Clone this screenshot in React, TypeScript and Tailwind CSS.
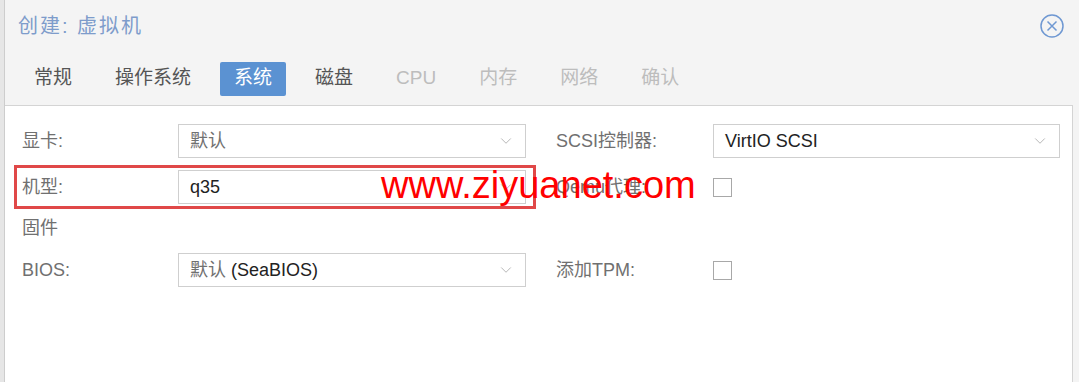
import { ChevronDown } from "lucide-react";

const font = { fontFamily: '"Liberation Sans", "Noto Sans CJK SC", sans-serif' };

function Select({ children }: { children: React.ReactNode }) {
    return (
        <div className="w-[348px] h-[34px] border border-[#cfcfcf] bg-white flex items-center justify-between pl-[11px] pr-[10px]">
            <span className="text-[18px] text-[#222]">{children}</span>
            <ChevronDown className="w-[18px] h-[18px] text-[#b5b5b5]" strokeWidth={1.3} />
        </div>
    );
}

function Checkbox() {
    return <div className="w-[19px] h-[19px] border-[1.5px] border-[#a8a8a8] bg-white" />;
}

function Row({ label, children }: { label: string; children: React.ReactNode }) {
    return (
        <div className="flex items-center h-[34px]">
            <div className="w-[156px] text-[18px] text-[#707070]">{label}</div>
            {children}
        </div>
    );
}

const tabs = [
    { name: "常规", state: "normal" },
    { name: "操作系统", state: "normal" },
    { name: "系统", state: "active" },
    { name: "磁盘", state: "normal" },
    { name: "CPU", state: "disabled" },
    { name: "内存", state: "disabled" },
    { name: "网络", state: "disabled" },
    { name: "确认", state: "disabled" },
];

export default function App() {
    return (
        <div className="w-[1079px] h-[382px] bg-[#f4f4f4] flex overflow-hidden relative" style={font}>
            <div className="w-[5px] h-full bg-[#e6e6e6] border-r border-[#cdcdcd]" />
            <div className="flex-1 flex flex-col">
                {/* header */}
                <div className="h-[52px] flex items-center justify-between pl-[13px] pr-[15px]">
                    <span className="text-[20px] tracking-[2px] text-[#7e9ccb]">创建: 虚拟机</span>
                    <svg width="24" height="24" viewBox="0 0 24 24" fill="none" stroke="#6f98d2" strokeWidth="1.5">
                        <circle cx="12" cy="12" r="11" />
                        <path d="M7.5 7.5 L16.5 16.5 M16.5 7.5 L7.5 16.5" />
                    </svg>
                </div>

                {/* tabs */}
                <div className="h-[53px] flex items-center gap-[15px] pl-[15px]">
                    {tabs.map((t) => (
                        <div
                            key={t.name}
                            className={
                                t.state === "active"
                                    ? "h-[34px] px-[14px] flex items-center rounded-[2px] bg-[#5b92d2] text-white text-[19px]"
                                    : t.state === "disabled"
                                    ? "h-[34px] px-[14px] flex items-center text-[#bdbdbd] text-[19px]"
                                    : "h-[34px] px-[14px] flex items-center text-[#555] text-[19px]"
                            }
                        >
                            {t.name}
                        </div>
                    ))}
                </div>

                {/* panel */}
                <div className="flex-1 mr-[6px] bg-white border-t border-r border-[#d4d4d4] pt-[18px] pl-[17px] flex gap-[30px]">
                    <div className="flex flex-col gap-[12px]">
                        <Row label="显卡:">
                            <Select><span className="text-[#707070]">默认</span></Select>
                        </Row>
                        <Row label="机型:">
                            <Select>q35</Select>
                        </Row>
                        <div className="h-[25px] flex items-center text-[18px] text-[#707070]">固件</div>
                        <Row label="BIOS:">
                            <Select><span className="text-[#707070]">默认</span> (SeaBIOS)</Select>
                        </Row>
                    </div>
                    <div className="flex flex-col gap-[12px]">
                        <div className="flex items-center h-[34px]">
                            <div className="w-[157px] text-[18px] text-[#707070]">SCSI控制器:</div>
                            <div className="w-[347px] h-[34px] border border-[#cfcfcf] bg-white flex items-center justify-between pl-[11px] pr-[10px]">
                                <span className="text-[18px] text-[#222]">VirtIO SCSI</span>
                                <ChevronDown className="w-[18px] h-[18px] text-[#b5b5b5]" strokeWidth={1.3} />
                            </div>
                        </div>
                        <div className="flex items-center h-[34px]">
                            <div className="w-[157px] text-[18px] text-[#707070]">Qemu代理:</div>
                            <Checkbox />
                        </div>
                        <div className="h-[25px]" />
                        <div className="flex items-center h-[34px]">
                            <div className="w-[157px] text-[18px] text-[#707070]">添加TPM:</div>
                            <Checkbox />
                        </div>
                    </div>
                </div>
            </div>

            {/* highlight box */}
            <div className="absolute left-[14px] top-[165px] w-[522px] h-[44px] border-[3px] border-[#e04848]" />

            {/* watermark */}
            <div className="absolute left-[381px] top-[166px] text-[38px] leading-none text-[#ff0000]">
                www.ziyuanet.com
            </div>
        </div>
    );
}
